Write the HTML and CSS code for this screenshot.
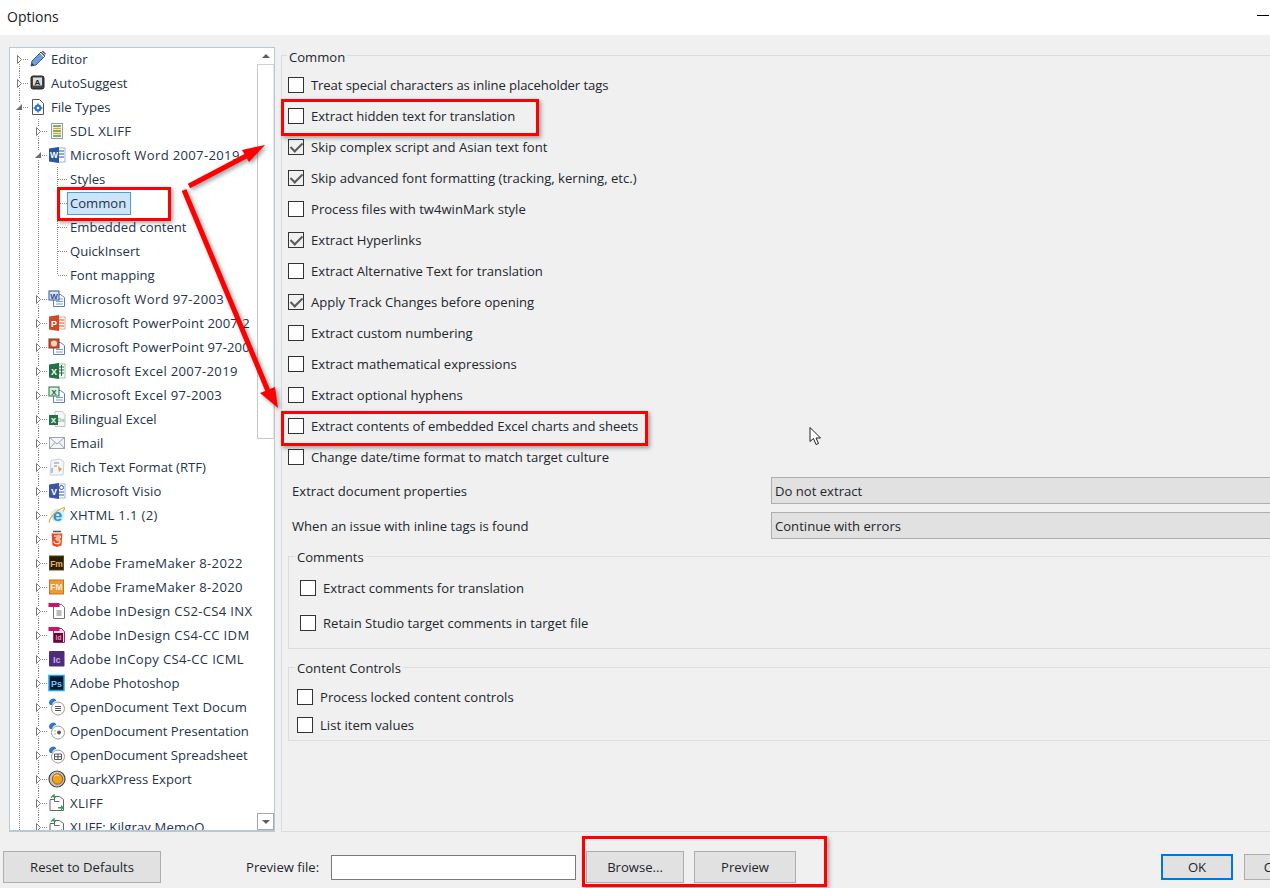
FILE: index.html
```html
<!DOCTYPE html>
<html lang="en">
<head>
<meta charset="utf-8">
<title>Options</title>
<link rel="stylesheet" href="styles.css">
</head>
<body>
<svg class="defs" width="0" height="0" aria-hidden="true">
  <defs>
    <symbol id="tw-first" viewBox="0 0 19 24"><path class="dot" d="M9.500 17V24M13 12.500H19"/><path d="M7.500 8.500l4 4-4 4z" fill="#fff" stroke="#7a7a7a"/></symbol>
    <symbol id="tw-r" viewBox="0 0 19 24"><path class="dot" d="M9.500 0V8M9.500 17V24M13 12.500H19"/><path d="M7.500 8.500l4 4-4 4z" fill="#fff" stroke="#7a7a7a"/></symbol>
    <symbol id="tw-d" viewBox="0 0 19 24"><path class="dot" d="M9.500 0V8M9.500 17V24M13 12.500H19"/><path d="M12 9v6H6z" fill="#6e6e6e"/></symbol>
    <symbol id="br" viewBox="0 0 19 24"><path class="dot" d="M9.500 0V24M10 12.500H19"/></symbol>
    <symbol id="br-end" viewBox="0 0 19 24"><path class="dot" d="M9.500 0V12M10 12.500H19"/></symbol>
    <symbol id="vl" viewBox="0 0 19 24"><path class="dot" d="M9.500 0V24"/></symbol>

    <symbol id="i-editor" viewBox="0 0 18 18"><path d="M2 16l1-5L12 2l4 4-9 9z" fill="#6d9fd6" stroke="#2f5f9e"/><path d="M11 3l4 4" stroke="#fff"/><path d="M12.500 1.500l1.500-1 3 3-1 1.500z" fill="#c8524c"/><path d="M2 16l1-3 2 2z" fill="#333"/></symbol>
    <symbol id="i-auto" viewBox="0 0 18 18"><rect x="2" y="2" width="13" height="13" rx="2" fill="#444" stroke="#222"/><rect x="4" y="3.500" width="9" height="8" fill="#ddd"/><text x="8.500" y="10.500" class="ict" font-size="8" fill="#222">A</text></symbol>
    <symbol id="i-types" viewBox="0 0 18 18"><path d="M3.500 1.500h7l4 4v11h-11z" fill="#fff" stroke="#555"/><circle cx="9" cy="10" r="3.500" fill="#2f74c0"/><circle cx="9" cy="10" r="1.300" fill="#fff"/><path d="M9 5.500v2M9 12.500v2M4.500 10h2M11.500 10h2" stroke="#2f74c0" stroke-width="1.500"/></symbol>
    <symbol id="i-sdl" viewBox="0 0 18 18"><rect x="3.500" y="1.500" width="11" height="15" fill="#fff" stroke="#999"/><path d="M5 4h8" stroke="#3d9b3d" stroke-width="1.500"/><path d="M5 6.500h8" stroke="#e3a32b" stroke-width="1.500"/><path d="M5 9h8" stroke="#3d9b3d" stroke-width="1.500"/><path d="M5 11.500h8" stroke="#e3a32b" stroke-width="1.500"/><path d="M5 14h8" stroke="#3d9b3d" stroke-width="1.500"/></symbol>
    <symbol id="i-word" viewBox="0 0 18 18"><rect x="9" y="2" width="8" height="14" fill="#fff" stroke="#9db3d6"/><path d="M11 5h5M11 8h5M11 11h5" stroke="#2b579a"/><path d="M1 2.500l10-1.500v16L1 15.500z" fill="#2b579a"/><text x="6" y="12" class="ict" font-size="8.500" fill="#fff">W</text></symbol>
    <symbol id="i-word97" viewBox="0 0 18 18"><path d="M5.500 4.500h7l4 3v9h-11z" fill="#fff" stroke="#5f7fb0"/><path d="M8 9h7M8 11.500h7M8 14h7" stroke="#7d9ac6"/><rect x="1" y="1" width="10" height="9" fill="#dbe6f6" stroke="#2b579a"/><text x="6" y="8.500" class="ict" font-size="8" fill="#1f4a94">W</text></symbol>
    <symbol id="i-ppt" viewBox="0 0 18 18"><rect x="9" y="3" width="8" height="12" fill="#fff" stroke="#e5a48f"/><path d="M11 6h5M11 9h5M11 12h5" stroke="#d24726"/><path d="M1 2.500l10-1.500v16L1 15.500z" fill="#d24726"/><text x="6" y="12.500" class="ict" font-size="9" fill="#fff">P</text></symbol>
    <symbol id="i-ppt97" viewBox="0 0 18 18"><path d="M5.500 4.500h7l4 3v9h-11z" fill="#fff" stroke="#5f7fb0"/><path d="M8 11.500h7M8 14h7" stroke="#7d9ac6"/><rect x="1" y="1" width="10" height="9" fill="#c8533a" stroke="#8a3020"/><circle cx="6" cy="5.500" r="3" fill="#f1d6b8"/></symbol>
    <symbol id="i-xls" viewBox="0 0 18 18"><rect x="9" y="2" width="8" height="14" fill="#fff" stroke="#9cc4ac"/><path d="M11 5h5M11 8h5M11 11h5M13.500 3v11" stroke="#217346"/><path d="M1 2.500l10-1.500v16L1 15.500z" fill="#217346"/><text x="6" y="12.500" class="ict" font-size="9" fill="#fff">X</text></symbol>
    <symbol id="i-xls97" viewBox="0 0 18 18"><path d="M5.500 4.500h7l4 3v9h-11z" fill="#fff" stroke="#5f7fb0"/><path d="M8 11.500h7M8 14h7" stroke="#7d9ac6"/><rect x="1" y="1" width="10" height="9" fill="#dcefdc" stroke="#217346"/><text x="6" y="8.500" class="ict" font-size="8" fill="#176b38">X</text></symbol>
    <symbol id="i-bil" viewBox="0 0 18 18"><path d="M7 1.500h7l3 3v12H7z" fill="#f6f6f6" stroke="#c4c4c4"/><text x="13" y="12" class="ict" font-size="6" fill="#9bb5a5">Dx</text><rect x="1" y="5" width="9" height="10" fill="#217346"/><text x="5.500" y="13" class="ict" font-size="8" fill="#fff">X</text></symbol>
    <symbol id="i-mail" viewBox="0 0 18 18"><rect x="1.500" y="3.500" width="15" height="11" fill="#f3f5f8" stroke="#9aa5b1"/><path d="M1.500 3.500L9 10l7.500-6.500M1.500 14.500L7 8.500M16.500 14.500L11 8.500" fill="none" stroke="#9aa5b1"/></symbol>
    <symbol id="i-rtf" viewBox="0 0 18 18"><path d="M3 2.500l9-1.500 4 3-1 13H2z" fill="#f4f6fa" stroke="#c9cfd8"/><path d="M6 5h5M6 8h3" stroke="#7b8fb0"/><path d="M10 8l4 3-3 3z" fill="#d9a441"/><path d="M4 10v5" stroke="#a7c1de" stroke-width="2"/></symbol>
    <symbol id="i-visio" viewBox="0 0 18 18"><rect x="9" y="2" width="8" height="14" fill="#fff" stroke="#9db3d6"/><circle cx="13.500" cy="5.500" r="2" fill="none" stroke="#3955a3"/><path d="M11 10h5M11 13h5" stroke="#3955a3"/><path d="M1 2.500l10-1.500v16L1 15.500z" fill="#3955a3"/><text x="6" y="12.500" class="ict" font-size="9" fill="#fff">V</text></symbol>
    <symbol id="i-ie" viewBox="0 0 18 18"><circle cx="9.500" cy="9.500" r="7" fill="#d9eefb"/><text x="9.500" y="15" class="ict" font-size="17" fill="#2b8fdb">e</text><path d="M1.500 16.500C.500 12 10 3 16 1.500c1.500 1-.500 3-1 4" fill="none" stroke="#e8a92c" stroke-width="1.200"/></symbol>
    <symbol id="i-html" viewBox="0 0 18 18"><path d="M3.500 3.500h11L13.500 15.500 9 17l-4.500-1.500z" fill="#e44d26"/><path d="M9 4v12l3.500-1 .9-11z" fill="#f16529"/><path d="M6 6h6.500l-.2 2H8l.2 2h3.900l-.3 3-2.800.8-2.800-.8-.2-1.700" fill="none" stroke="#fff"/><path d="M5 1.500h8" stroke="#555" stroke-width="1.500"/></symbol>
    <symbol id="i-fm1" viewBox="0 0 18 18"><rect x="1.500" y="2" width="14" height="14" fill="#2a1c06" stroke="#5a4515"/><text x="8.500" y="13" class="ict" font-size="8.500" fill="#e2b867">Fm</text></symbol>
    <symbol id="i-fm2" viewBox="0 0 18 18"><rect x="1.500" y="2" width="14" height="14" fill="#ec9a3b" stroke="#c9761d"/><text x="8.500" y="12" class="ict" font-size="8.500" fill="#fff1d8">FM</text></symbol>
    <symbol id="i-inx" viewBox="0 0 18 18"><path d="M5.500 2.500h8l3 3v11h-11z" fill="#fff" stroke="#777"/><path d="M8.500 9h5M8.500 11h5M8.500 13h5" stroke="#777"/><rect x="0.500" y="1" width="11" height="4" fill="#c2176b"/></symbol>
    <symbol id="i-idm" viewBox="0 0 18 18"><path d="M5.500 2.500h8l3 3v11h-11z" fill="#f8d6e6" stroke="#9c2a66"/><rect x="0.500" y="1" width="11" height="4" fill="#c2176b"/><rect x="6" y="7" width="9" height="9" fill="#5c0d35"/><text x="10.500" y="14" class="ict" font-size="6.500" fill="#f58fc0">Id</text></symbol>
    <symbol id="i-ic" viewBox="0 0 18 18"><rect x="1" y="1" width="15.500" height="15.500" rx="1" fill="#4d2c7a"/><text x="8.700" y="12.500" class="ict" font-size="9" fill="#c7aee8">Ic</text></symbol>
    <symbol id="i-ps" viewBox="0 0 18 18"><rect x="1" y="1.500" width="15" height="15" fill="#06192c" stroke="#20a4f3" stroke-width="1.500"/><text x="8.500" y="12.500" class="ict" font-size="9" fill="#6ac7ff">Ps</text></symbol>
    <symbol id="i-odt" viewBox="0 0 18 18"><circle cx="10" cy="10.500" r="6.500" fill="#fff" stroke="#9a9a9a"/><path d="M7 8.500h6M7 10.500h6M7 12.500h6" stroke="#555"/><path d="M1 5a4 4 0 0 1 7-3v1a5 5 0 0 0-4 4H2z" fill="#2f78c9"/></symbol>
    <symbol id="i-odp" viewBox="0 0 18 18"><circle cx="10" cy="10.500" r="6.500" fill="#fff" stroke="#9a9a9a"/><circle cx="11" cy="10.500" r="2" fill="#555"/><path d="M6.500 9h1M6.500 12h1" stroke="#555"/><path d="M1 5a4 4 0 0 1 7-3v1a5 5 0 0 0-4 4H2z" fill="#2f78c9"/></symbol>
    <symbol id="i-ods" viewBox="0 0 18 18"><circle cx="10" cy="10.500" r="6.500" fill="#fff" stroke="#9a9a9a"/><path d="M6.500 8h7v5.500h-7zM10 8v5.500M6.500 10.700h7" fill="none" stroke="#555"/><path d="M1 5a4 4 0 0 1 7-3v1a5 5 0 0 0-4 4H2z" fill="#2f78c9"/></symbol>
    <symbol id="i-quark" viewBox="0 0 18 18"><circle cx="9" cy="9" r="8" fill="#c4c4c4" stroke="#444" stroke-width="1.200"/><circle cx="9.500" cy="9" r="5.200" fill="#f0a21e" stroke="#9a6108"/><path d="M6 6.500a4 4 0 0 1 5-1" stroke="#ffe3a8" fill="none"/></symbol>
    <symbol id="i-xliff" viewBox="0 0 18 18"><path d="M2 5.500h4.500v-3h5l4 3v11H2z" fill="#fff" stroke="#666"/><path d="M6.500 2.500v5h5" fill="none" stroke="#666"/><path d="M3 3.500l3-2.500v2h2" fill="none" stroke="#2ba35a" stroke-width="1.500"/><path d="M10 13h3v-2l3 2.500-3 3v-2h-3z" fill="#2ba35a"/></symbol>
  </defs>
</svg>

<div class="window">
  <header class="titlebar"><span>Options</span><span class="win-min"></span></header>

  <main class="main">
    <div class="tree">
      <ul class="tree-list">
        <li class="row"><svg class="cell"><use href="#tw-first"/></svg><svg class="ic"><use href="#i-editor"/></svg><span class="lbl">Editor</span></li>
        <li class="row"><svg class="cell"><use href="#tw-r"/></svg><svg class="ic"><use href="#i-auto"/></svg><span class="lbl">AutoSuggest</span></li>
        <li class="row"><svg class="cell"><use href="#tw-d"/></svg><svg class="ic"><use href="#i-types"/></svg><span class="lbl">File Types</span></li>
        <li class="row"><svg class="cell"><use href="#vl"/></svg><svg class="cell"><use href="#tw-r"/></svg><svg class="ic"><use href="#i-sdl"/></svg><span class="lbl lbl-w">SDL XLIFF</span></li>
        <li class="row"><svg class="cell"><use href="#vl"/></svg><svg class="cell"><use href="#tw-d"/></svg><svg class="ic"><use href="#i-word"/></svg><span class="lbl lbl-w">Microsoft Word 2007-2019</span></li>
        <li class="row"><svg class="cell"><use href="#vl"/></svg><svg class="cell"><use href="#vl"/></svg><svg class="cell"><use href="#br"/></svg><span class="lbl">Styles</span></li>
        <li class="row"><svg class="cell"><use href="#vl"/></svg><svg class="cell"><use href="#vl"/></svg><svg class="cell"><use href="#br"/></svg><span class="lbl lbl-selected">Common</span></li>
        <li class="row"><svg class="cell"><use href="#vl"/></svg><svg class="cell"><use href="#vl"/></svg><svg class="cell"><use href="#br"/></svg><span class="lbl">Embedded content</span></li>
        <li class="row"><svg class="cell"><use href="#vl"/></svg><svg class="cell"><use href="#vl"/></svg><svg class="cell"><use href="#br"/></svg><span class="lbl">QuickInsert</span></li>
        <li class="row"><svg class="cell"><use href="#vl"/></svg><svg class="cell"><use href="#vl"/></svg><svg class="cell"><use href="#br-end"/></svg><span class="lbl">Font mapping</span></li>
        <li class="row"><svg class="cell"><use href="#vl"/></svg><svg class="cell"><use href="#tw-r"/></svg><svg class="ic"><use href="#i-word97"/></svg><span class="lbl lbl-w">Microsoft Word 97-2003</span></li>
        <li class="row"><svg class="cell"><use href="#vl"/></svg><svg class="cell"><use href="#tw-r"/></svg><svg class="ic"><use href="#i-ppt"/></svg><span class="lbl lbl-s">Microsoft PowerPoint 2007-2</span></li>
        <li class="row"><svg class="cell"><use href="#vl"/></svg><svg class="cell"><use href="#tw-r"/></svg><svg class="ic"><use href="#i-ppt97"/></svg><span class="lbl lbl-s">Microsoft PowerPoint 97-200</span></li>
        <li class="row"><svg class="cell"><use href="#vl"/></svg><svg class="cell"><use href="#tw-r"/></svg><svg class="ic"><use href="#i-xls"/></svg><span class="lbl lbl-w">Microsoft Excel 2007-2019</span></li>
        <li class="row"><svg class="cell"><use href="#vl"/></svg><svg class="cell"><use href="#tw-r"/></svg><svg class="ic"><use href="#i-xls97"/></svg><span class="lbl lbl-w">Microsoft Excel 97-2003</span></li>
        <li class="row"><svg class="cell"><use href="#vl"/></svg><svg class="cell"><use href="#tw-r"/></svg><svg class="ic"><use href="#i-bil"/></svg><span class="lbl">Bilingual Excel</span></li>
        <li class="row"><svg class="cell"><use href="#vl"/></svg><svg class="cell"><use href="#tw-r"/></svg><svg class="ic"><use href="#i-mail"/></svg><span class="lbl">Email</span></li>
        <li class="row"><svg class="cell"><use href="#vl"/></svg><svg class="cell"><use href="#tw-r"/></svg><svg class="ic"><use href="#i-rtf"/></svg><span class="lbl">Rich Text Format (RTF)</span></li>
        <li class="row"><svg class="cell"><use href="#vl"/></svg><svg class="cell"><use href="#tw-r"/></svg><svg class="ic"><use href="#i-visio"/></svg><span class="lbl lbl-s">Microsoft Visio</span></li>
        <li class="row"><svg class="cell"><use href="#vl"/></svg><svg class="cell"><use href="#tw-r"/></svg><svg class="ic"><use href="#i-ie"/></svg><span class="lbl lbl-w">XHTML 1.1 (2)</span></li>
        <li class="row"><svg class="cell"><use href="#vl"/></svg><svg class="cell"><use href="#tw-r"/></svg><svg class="ic"><use href="#i-html"/></svg><span class="lbl lbl-w">HTML 5</span></li>
        <li class="row"><svg class="cell"><use href="#vl"/></svg><svg class="cell"><use href="#tw-r"/></svg><svg class="ic"><use href="#i-fm1"/></svg><span class="lbl lbl-w">Adobe FrameMaker 8-2022</span></li>
        <li class="row"><svg class="cell"><use href="#vl"/></svg><svg class="cell"><use href="#tw-r"/></svg><svg class="ic"><use href="#i-fm2"/></svg><span class="lbl lbl-w">Adobe FrameMaker 8-2020</span></li>
        <li class="row"><svg class="cell"><use href="#vl"/></svg><svg class="cell"><use href="#tw-r"/></svg><svg class="ic"><use href="#i-inx"/></svg><span class="lbl lbl-w">Adobe InDesign CS2-CS4 INX</span></li>
        <li class="row"><svg class="cell"><use href="#vl"/></svg><svg class="cell"><use href="#tw-r"/></svg><svg class="ic"><use href="#i-idm"/></svg><span class="lbl lbl-w">Adobe InDesign CS4-CC IDM</span></li>
        <li class="row"><svg class="cell"><use href="#vl"/></svg><svg class="cell"><use href="#tw-r"/></svg><svg class="ic"><use href="#i-ic"/></svg><span class="lbl lbl-w">Adobe InCopy CS4-CC ICML</span></li>
        <li class="row"><svg class="cell"><use href="#vl"/></svg><svg class="cell"><use href="#tw-r"/></svg><svg class="ic"><use href="#i-ps"/></svg><span class="lbl">Adobe Photoshop</span></li>
        <li class="row"><svg class="cell"><use href="#vl"/></svg><svg class="cell"><use href="#tw-r"/></svg><svg class="ic"><use href="#i-odt"/></svg><span class="lbl lbl-s">OpenDocument Text Docum</span></li>
        <li class="row"><svg class="cell"><use href="#vl"/></svg><svg class="cell"><use href="#tw-r"/></svg><svg class="ic"><use href="#i-odp"/></svg><span class="lbl">OpenDocument Presentation</span></li>
        <li class="row"><svg class="cell"><use href="#vl"/></svg><svg class="cell"><use href="#tw-r"/></svg><svg class="ic"><use href="#i-ods"/></svg><span class="lbl">OpenDocument Spreadsheet</span></li>
        <li class="row"><svg class="cell"><use href="#vl"/></svg><svg class="cell"><use href="#tw-r"/></svg><svg class="ic"><use href="#i-quark"/></svg><span class="lbl">QuarkXPress Export</span></li>
        <li class="row"><svg class="cell"><use href="#vl"/></svg><svg class="cell"><use href="#tw-r"/></svg><svg class="ic"><use href="#i-xliff"/></svg><span class="lbl lbl-w">XLIFF</span></li>
        <li class="row"><svg class="cell"><use href="#vl"/></svg><svg class="cell"><use href="#tw-r"/></svg><svg class="ic"><use href="#i-xliff"/></svg><span class="lbl lbl-s">XLIFF: Kilgray MemoQ</span></li>
      </ul>
      <div class="scrollbar">
        <div class="sb-btn sb-up"><span class="tri tri-up"></span></div>
        <div class="sb-thumb"></div>
        <div class="sb-track"></div>
        <div class="sb-btn sb-down"><span class="tri tri-down"></span></div>
      </div>
    </div>

    <fieldset class="group group-main">
      <legend>Common</legend>
      <div class="opt"><span class="box"></span><span class="opt-tight">Treat special characters as inline placeholder tags</span></div>
      <div class="opt"><span class="box"></span><span class="opt-snug">Extract hidden text for translation</span></div>
      <div class="opt"><span class="box checked"></span><span>Skip complex script and Asian text font</span></div>
      <div class="opt"><span class="box checked"></span><span>Skip advanced font formatting (tracking, kerning, etc.)</span></div>
      <div class="opt"><span class="box"></span><span>Process files with tw4winMark style</span></div>
      <div class="opt"><span class="box checked"></span><span>Extract Hyperlinks</span></div>
      <div class="opt"><span class="box"></span><span>Extract Alternative Text for translation</span></div>
      <div class="opt"><span class="box checked"></span><span>Apply Track Changes before opening</span></div>
      <div class="opt"><span class="box"></span><span>Extract custom numbering</span></div>
      <div class="opt"><span class="box"></span><span>Extract mathematical expressions</span></div>
      <div class="opt"><span class="box"></span><span>Extract optional hyphens</span></div>
      <div class="opt"><span class="box"></span><span class="opt-snug">Extract contents of embedded Excel charts and sheets</span></div>
      <div class="opt"><span class="box"></span><span>Change date/time format to match target culture</span></div>

      <div class="field field-first"><span class="field-label">Extract document properties</span><div class="select">Do not extract</div></div>
      <div class="field"><span class="field-label">When an issue with inline tags is found</span><div class="select">Continue with errors</div></div>

      <fieldset class="group group-comments">
        <legend>Comments</legend>
        <div class="opt opt-tall"><span class="box"></span><span>Extract comments for translation</span></div>
        <div class="opt opt-tall"><span class="box"></span><span>Retain Studio target comments in target file</span></div>
      </fieldset>

      <fieldset class="group group-controls">
        <legend>Content Controls</legend>
        <div class="opt opt-mid"><span class="box"></span><span>Process locked content controls</span></div>
        <div class="opt opt-mid"><span class="box"></span><span>List item values</span></div>
      </fieldset>
    </fieldset>
  </main>

  <footer class="footer">
    <button class="btn btn-reset">Reset to Defaults</button>
    <span class="preview-label">Preview file:</span>
    <div class="input"></div>
    <button class="btn btn-browse">Browse...</button>
    <button class="btn btn-preview">Preview</button>
    <button class="btn btn-ok">OK</button>
    <button class="btn btn-cancel">Cancel</button>
  </footer>

  <div class="mark mark-hidden"></div>
  <div class="mark mark-embedded"></div>
  <div class="mark mark-common"></div>
  <div class="mark mark-buttons"></div>

  <svg class="overlay" width="1270" height="888" viewBox="0 0 1270 888" aria-hidden="true">
    <g class="arrow">
      <path class="shaft" d="M189 186L248 155"/>
      <path d="M265 145L242 150L249 162z"/>
      <path class="shaft" d="M184 190L268 391"/>
      <path d="M278 408L260 393L275 387z"/>
    </g>
    <path class="cursor" d="M810 427.500v14l3.500-3 2.500 6 2.500-1-2.500-5.500h4.500z"/>
  </svg>
</div>
</body>
</html>
```
FILE: styles.css
```css
* { box-sizing: border-box; }
html, body { margin: 0; padding: 0; }
body {
  width: 1270px;
  height: 888px;
  overflow: hidden;
  font-family: "Open Sans", "Noto Sans", sans-serif;
  font-size: 13.1px;
  color: #22262c;
}
.defs { position: absolute; }
.dot { stroke: #8a8a8a; stroke-dasharray: 1 1; fill: none; }
.ict { font-family: "Liberation Sans", sans-serif; font-weight: 700; text-anchor: middle; }

.window {
  position: relative;
  width: 1270px;
  height: 888px;
  overflow: hidden;
  display: flex;
  flex-direction: column;
  background: #f0f0f0;
}
.titlebar {
  flex: none;
  display: flex;
  justify-content: space-between;
  height: 35px;
  padding: 0 1px 0 7px;
  background: #fff;
  font-size: 14px;
  line-height: 34px;
  color: #1a1a1a;
}
.win-min { flex: none; width: 12px; height: 1px; margin-top: 15px; background: #000; }

.main { flex: none; height: 797px; display: flex; align-items: flex-start; }

/* Tree */
.tree {
  flex: none;
  display: flex;
  width: 266px;
  height: 785px;
  margin: 12px 0 0 9px;
  background: #fff;
  border: 1px solid #b9c8d2;
  border-width: 1px 1px 2px 1px;
}
.tree-list {
  flex: 1;
  min-width: 0;
  margin: -1px 0 0;
  padding: 0;
  list-style: none;
  overflow: hidden;
  color: #24344a;
}
.row { display: flex; align-items: center; height: 24px; white-space: nowrap; }
.cell { flex: none; width: 19px; height: 24px; }
.ic { flex: none; width: 18px; height: 18px; margin-right: 1px; }
.lbl { margin-left: 3px; line-height: 20px; }
.lbl-w { letter-spacing: .32px; }
.lbl-s { letter-spacing: .12px; }
.lbl-selected {
  margin-left: 0;
  padding: 0 4px 0 2px;
  height: 23px;
  line-height: 21px;
  background: #cce4f7;
  border: 1px solid #4a9fd8;
  color: #24344a;
}

.scrollbar { flex: none; width: 17px; display: flex; flex-direction: column; background: #fff; }
.sb-btn { flex: none; height: 17px; display: flex; align-items: center; justify-content: center; background: #fff; }
.sb-up { border-bottom: 1px solid #d0d0d0; }
.sb-down { border: 1px solid #a8a8a8; }
.sb-thumb { flex: none; height: 374px; background: #fff; border-left: 1px solid #c8c8c8; border-bottom: 1px solid #c8c8c8; border-right: 1px solid #e4e4e4; }
.sb-track { flex: 1; }
.tri { width: 0; height: 0; border-left: 4px solid transparent; border-right: 4px solid transparent; }
.tri-up { border-bottom: 4px solid #606060; }
.tri-down { border-top: 4px solid #606060; }

/* Groups */
.group {
  min-width: 0;
  margin: 0;
  padding: 0;
  border: 1px solid #dcdcdc;
}
.group legend {
  margin-left: 5px;
  padding: 4px 2px 0;
  line-height: 18px;
  color: #22262c;
}
.group-main {
  flex: none;
  width: 1010px;
  height: 788px;
  margin: 9px 0 0 6px;
  padding-top: 3px;
}
.group-comments { margin: 7px 0 0 6px; padding: 4px 0 8px 11px; }
.group-comments legend { margin-left: -5px; padding-top: 2px; }
.group-controls { margin: 8px 0 0 6px; padding: 6px 0 1px 8px; }
.group-controls legend { margin-left: -2px; padding-top: 2px; }

.opt { display: flex; align-items: center; height: 31px; padding-left: 6px; }
.opt-tall { height: 35px; padding-left: 0; }
.opt-mid { height: 28px; padding-left: 0; }
.opt-tight { letter-spacing: -.1px; }
.opt-snug { letter-spacing: -.05px; }
.box {
  flex: none;
  position: relative;
  width: 16px;
  height: 16px;
  margin-right: 7px;
  background: #fff;
  border: 1px solid #333;
}
.box.checked { background: #f0f0f0; }
.box.checked::after {
  content: "";
  position: absolute;
  left: 4px;
  top: 0;
  width: 5px;
  height: 10px;
  border: solid #5a5a5a;
  border-width: 0 2px 2px 0;
  transform: rotate(45deg);
}

.field { display: flex; align-items: center; height: 27px; margin-top: 8px; padding-left: 10px; }
.field-first { margin-top: 5px; }
.field-label { flex: none; width: 479px; }
.select {
  flex: none;
  width: 560px;
  height: 27px;
  padding-left: 3px;
  line-height: 26px;
  background: #e1e1e1;
  border: 1px solid #adadad;
}

/* Footer */
.footer { flex: none; display: flex; align-items: center; height: 56px; padding: 19px 0 5px; }
.btn {
  flex: none;
  height: 32px;
  padding: 0;
  font: inherit;
  color: #22262c;
  background: #e1e1e1;
  border: 1px solid #adadad;
}
.btn-reset { width: 158px; margin-left: 3px; }
.preview-label { flex: none; width: 85px; margin-left: 85px; }
.input { flex: none; width: 245px; height: 25px; background: #fff; border: 1px solid #7a7a7a; }
.btn-browse { width: 98px; margin-left: 10px; }
.btn-preview { width: 102px; margin-left: 10px; }
.btn-ok { width: 72px; height: 26px; margin-left: 365px; border: 2px solid #0078d7; }
.btn-cancel { width: 80px; height: 26px; margin-left: 11px; }

/* Annotations on top of the screenshot */
.mark {
  position: absolute;
  border: 3px solid #f00;
  box-shadow: 2px 2px 4px rgba(0, 0, 0, .35);
}
.mark-hidden { left: 281px; top: 99px; width: 258px; height: 37px; }
.mark-embedded { left: 281px; top: 411px; width: 367px; height: 35px; }
.mark-common { left: 57px; top: 187px; width: 114px; height: 34px; }
.mark-buttons { left: 582px; top: 836px; width: 245px; height: 51px; }
.overlay { position: absolute; left: 0; top: 0; pointer-events: none; }
.arrow { fill: #f00; filter: drop-shadow(2px 2px 2px rgba(0, 0, 0, .4)); }
.shaft { fill: none; stroke: #f00; stroke-width: 5; }
.cursor { fill: #fff; stroke: #222; stroke-width: 1; }
```
